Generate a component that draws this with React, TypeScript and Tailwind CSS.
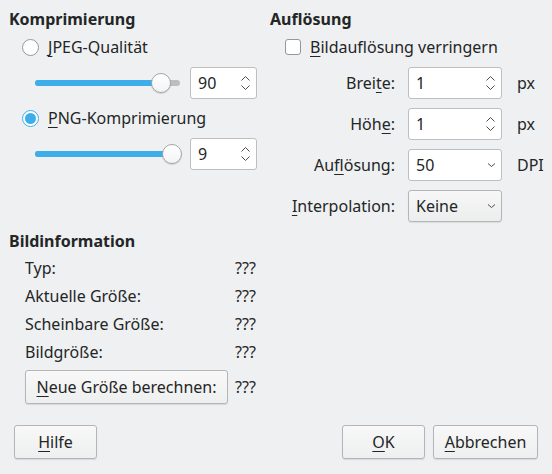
import React from "react";

function Chevron({ dir }: { dir: "up" | "down" }) {
  return (
    <svg width="9" height="6" viewBox="0 0 9 6" className="block">
      {dir === "up" ? (
        <path d="M0.5 5.5 L4.5 1.5 L8.5 5.5" fill="none" stroke="#4d4d4f" strokeWidth="1" />
      ) : (
        <path d="M0.5 0.5 L4.5 4.5 L8.5 0.5" fill="none" stroke="#4d4d4f" strokeWidth="1" />
      )}
    </svg>
  );
}

function SpinBox({ value, w }: { value: string; w: string }) {
  return (
    <div className={`flex h-8 ${w} items-center justify-between rounded-[3px] border border-[#bcbebf] bg-white pl-[7px] pr-[6px]`}>
      <span>{value}</span>
      <div className="flex flex-col gap-[4px]">
        <Chevron dir="up" />
        <Chevron dir="down" />
      </div>
    </div>
  );
}

function Combo({ value, button }: { value: string; button?: boolean }) {
  return (
    <div
      className={`flex h-8 w-[94px] items-center justify-between rounded-[3px] border pl-[7px] pr-[5px] ${
        button
          ? "border-[#b4b5b6] bg-gradient-to-b from-[#f7f7f7] to-[#eceded] shadow-[0_1px_1px_rgba(0,0,0,0.08)]"
          : "border-[#bcbebf] bg-white"
      }`}
    >
      <span>{value}</span>
      <svg width="9" height="6" viewBox="0 0 9 6">
        <path d="M1 1.5 L4.5 4.5 L8 1.5" fill="none" stroke="#4d4d4f" strokeWidth="1" />
      </svg>
    </div>
  );
}

function Slider({ pct, width }: { pct: number; width: string }) {
  return (
    <div className={`relative h-5 ${width}`}>
      <div className="absolute left-0 right-0 top-[7px] h-[6px] rounded-full bg-[#bcbebf]" />
      <div
        className="absolute left-0 top-[7px] h-[6px] rounded-full bg-[#3daee9]"
        style={{ width: `${pct}%` }}
      />
      <div
        className="absolute top-0 h-5 w-5 -translate-x-1/2 rounded-full border border-[#a4a6a8] bg-gradient-to-b from-white to-[#f4f4f4] shadow-[0_1px_1px_rgba(0,0,0,0.15)]"
        style={{ left: `${pct}%` }}
      />
    </div>
  );
}

function Radio({ checked }: { checked?: boolean }) {
  return checked ? (
    <div className="flex h-[17px] w-[17px] items-center justify-center rounded-full border border-[#3daee9] bg-white">
      <div className="h-[11px] w-[11px] rounded-full bg-[#3daee9]" />
    </div>
  ) : (
    <div className="h-[17px] w-[17px] rounded-full border border-[#959799] bg-white" />
  );
}

function Button({ children, w }: { children: React.ReactNode; w: string }) {
  return (
    <div
      className={`flex h-[34px] ${w} items-center justify-center rounded-[3px] border border-[#b4b5b6] bg-gradient-to-b from-[#f8f8f8] to-[#eeefef] shadow-[0_1px_1px_rgba(0,0,0,0.1)]`}
    >
      {children}
    </div>
  );
}

const U = ({ children }: { children: React.ReactNode }) => (
  <span className="underline decoration-1 underline-offset-[3px]">{children}</span>
);

export default function App() {
  return (
    <div
      className="flex h-[474px] w-[552px] flex-col bg-[#eff0f1] text-[16px] leading-none text-[#232627]"
      style={{ fontFamily: '"Noto Sans", sans-serif' }}
    >
      <div className="flex pt-[10px]">
        {/* Komprimierung */}
        <div className="flex w-[270px] flex-col pl-[9px]">
          <div className="flex h-[17px] items-center font-bold">Komprimierung</div>
          <div className="mt-[11px] flex h-[18px] items-center gap-[9px] pl-[13px]">
            <Radio />
            <span>
              <U>J</U>PEG-Qualität
            </span>
          </div>
          <div className="mt-[11px] flex items-center gap-[10px] pl-[26px]">
            <Slider pct={87} width="w-[145px]" />
            <SpinBox value="90" w="w-[67px]" />
          </div>
          <div className="mt-[10px] flex h-[18px] items-center gap-[9px] pl-[13px]">
            <Radio checked />
            <span>
              <U>P</U>NG-Komprimierung
            </span>
          </div>
          <div className="mt-[11px] flex items-center gap-[10px] pl-[26px]">
            <Slider pct={94.5} width="w-[145px]" />
            <SpinBox value="9" w="w-[67px]" />
          </div>
        </div>

        {/* Auflösung */}
        <div className="flex flex-col">
          <div className="flex h-[17px] items-center font-bold">Auflösung</div>
          <div className="mt-[11px] flex h-[18px] items-center gap-[9px] pl-[15px]">
            <div className="h-4 w-4 rounded-[3px] border border-[#959799] bg-white" />
            <span>
              <U>B</U>ildauflösung verringern
            </span>
          </div>
          <div className="mt-[11px] grid grid-cols-[125px_94px_auto] items-center gap-x-[13px] gap-y-[9px]">
            <span className="text-right">
              Brei<U>t</U>e:
            </span>
            <SpinBox value="1" w="w-[94px]" />
            <span className="pl-[2px]">px</span>
            <span className="text-right">
              Höh<U>e</U>:
            </span>
            <SpinBox value="1" w="w-[94px]" />
            <span className="pl-[2px]">px</span>
            <span className="text-right">
              Au<U>f</U>lösung:
            </span>
            <Combo value="50" />
            <span className="pl-[2px]">DPI</span>
            <span className="text-right">
              <U>I</U>nterpolation:
            </span>
            <Combo value="Keine" button />
            <span />
          </div>
        </div>
      </div>

      {/* Bildinformation */}
      <div className="mt-[10px] flex flex-col pl-[9px]">
        <div className="flex h-[17px] items-center font-bold">Bildinformation</div>
        <div className="mt-[10px] grid grid-cols-[210px_auto] items-center gap-y-[11px] pl-[16px]">
          <span className="flex h-[17px] items-center">Typ:</span>
          <span>???</span>
          <span className="flex h-[17px] items-center">Aktuelle Größe:</span>
          <span>???</span>
          <span className="flex h-[17px] items-center">Scheinbare Größe:</span>
          <span>???</span>
          <span className="flex h-[17px] items-center">Bildgröße:</span>
          <span>???</span>
        </div>
        <div className="mt-[10px] flex items-center gap-[7px] pl-[16px]">
          <Button w="w-[203px]">
            <span>
              <U>N</U>eue Größe berechnen:
            </span>
          </Button>
          <span>???</span>
        </div>
      </div>

      <div className="mt-auto flex items-center px-[14px] pb-[15px]">
        <Button w="w-[83px]">
          <span>
            <U>H</U>ilfe
          </span>
        </Button>
        <div className="ml-auto flex gap-[8px]">
          <Button w="w-[83px]">
            <span>
              <U>O</U>K
            </span>
          </Button>
          <Button w="w-[105px]">
            <span>
              <U>A</U>bbrechen
            </span>
          </Button>
        </div>
      </div>
    </div>
  );
}
